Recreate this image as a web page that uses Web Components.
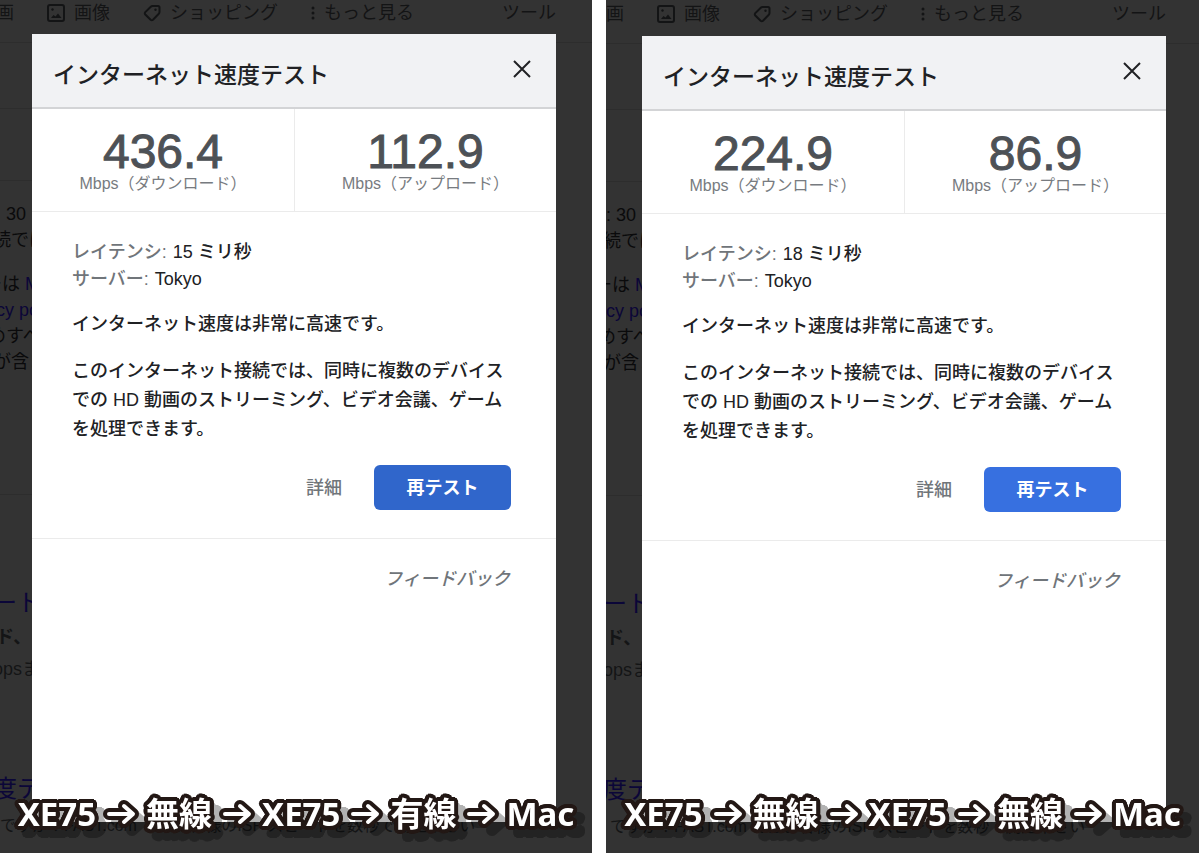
<!DOCTYPE html>
<html lang="ja">
<head>
<meta charset="UTF-8">
<meta name="viewport" content="width=device-width, initial-scale=1.0">
<title>インターネット速度テスト</title>
<style>
    body {
        margin: 0;
        background: #fff;
        font-family: "Liberation Sans", "Noto Sans CJK JP", sans-serif;
    }
</style>
</head>
<body>
<speed-compare>
    <search-pane style="--left: 32px; --right: 36px; --top: 34px; --shift: 0px">
        <speed-dialog slot="dialog" download="436.4" upload="112.9" latency="15" server="Tokyo" style="--accent: #3066cb"></speed-dialog>
        <route-caption slot="caption" route="XE75,無線,XE75,有線,Mac"></route-caption>
    </search-pane>
    <search-pane style="--left: 36px; --right: 33px; --top: 36px; --shift: 1px">
        <speed-dialog slot="dialog" download="224.9" upload="86.9" latency="18" server="Tokyo" style="--accent: #3770e0"></speed-dialog>
        <route-caption slot="caption" route="XE75,無線,XE75,無線,Mac"></route-caption>
    </search-pane>
</speed-compare>

<script>
class SpeedCompare extends HTMLElement {
    connectedCallback() {
        this.attachShadow({ mode: 'open' });
        this.shadowRoot.innerHTML = `
            <style>
                :host {
                    display: grid;
                    grid-template-columns: 592fr 593fr;
                    gap: 14px;
                    padding-right: 1px;
                    min-height: 100vh;
                    box-sizing: border-box;
                }
            </style>
            <slot></slot>
        `;
    }
}

// Dimmed results page with the dialog and the caption on top
class SearchPane extends HTMLElement {
    connectedCallback() {
        this.attachShadow({ mode: 'open' });
        this.shadowRoot.innerHTML = `
            <style>
                :host {
                    display: block;
                    position: relative;
                    overflow: hidden;
                    background: #333;
                    color: #0a0a0b;
                    font-size: 18px;
                    line-height: 26px;
                    white-space: nowrap;
                }
                .page {
                    margin-left: calc(var(--left) - 52px);
                    padding-top: var(--shift);
                }
                .tabs {
                    display: flex;
                    align-items: center;
                    padding: 0 var(--right) 16px 16px;
                    border-bottom: 1px solid #2d2d2d;
                }
                .tabs a {
                    display: flex;
                    align-items: center;
                    gap: 9px;
                    margin-right: 33px;
                    color: #131415;
                    text-decoration: none;
                }
                .tabs a.tools {
                    margin: 0 0 0 auto;
                }
                .tabs svg {
                    width: 18px;
                    height: 18px;
                    fill: none;
                    stroke: currentColor;
                    stroke-width: 2;
                }
                .tabs .more svg {
                    width: 4px;
                    fill: currentColor;
                    stroke: none;
                }
                section {
                    width: 80%;
                    box-sizing: border-box;
                    border-bottom: 1px solid #2d2d2d;
                }
                .row {
                    height: 66px;
                }
                .row.tall {
                    height: 72px;
                }
                .answer {
                    height: 314px;
                    padding-top: 20px;
                }
                p, h3 {
                    margin: 0;
                    font-weight: 400;
                }
                .gap {
                    margin-top: 18px;
                }
                /* lines of the page scrolled partly out of view */
                .in1 { padding-left: 4px; }
                .in2 { padding-left: 8px; }
                .in3 { padding-left: 13px; }
                .in4 { padding-left: 16px; }
                .in5 { padding-left: 20px; }
                a {
                    color: #0b0638;
                    text-decoration: none;
                }
                .results {
                    padding-top: 90px;
                    color: #141516;
                }
                h3 {
                    font-size: 24px;
                    line-height: 36px;
                }
                .results p {
                    line-height: 32px;
                }
                .results .small {
                    font-size: 16px;
                    line-height: 38px;
                }
                .next {
                    margin-top: 86px;
                }
                ::slotted([slot="dialog"]) {
                    position: absolute;
                    top: var(--top);
                    right: var(--right);
                    bottom: 31px;
                    left: var(--left);
                }
                ::slotted([slot="caption"]) {
                    position: absolute;
                    right: 0;
                    bottom: 16px;
                    left: 0;
                }
            </style>
            <div class="page">
                <nav class="tabs">
                    <a href="#">画</a>
                    <a href="#">
                        <svg viewBox="0 0 18 18" aria-hidden="true"><rect x="1" y="1" width="16" height="16" rx="2"/><path d="M4 14l2.500-3 2 1.500 2.500-3 3.500 4.500z" fill="currentColor" stroke="none"/><circle cx="5.500" cy="5.500" r="1.200" fill="currentColor" stroke="none"/></svg>
                        画像
                    </a>
                    <a href="#">
                        <svg viewBox="0 0 18 18" aria-hidden="true"><path d="M9.500 2H15q1.500 0 1.500 1.500V8q0 1-.7 1.700l-5.800 6q-1.200 1-2.400 0L2.300 10.500q-1-1.200 0-2.400L7.800 2.700Q8.500 2 9.500 2z"/><circle cx="12.500" cy="5.700" r="1.200" fill="currentColor" stroke="none"/></svg>
                        ショッピング
                    </a>
                    <a href="#" class="more">
                        <svg viewBox="0 0 4 18" aria-hidden="true"><circle cx="2" cy="4" r="1.500"/><circle cx="2" cy="9" r="1.500"/><circle cx="2" cy="14" r="1.500"/></svg>
                        もっと見る
                    </a>
                    <a href="#" class="tools">ツール</a>
                </nav>
                <section class="row"></section>
                <section class="row tall"></section>
                <section class="answer">
                    <p class="in4">: 30</p>
                    <p class="in3">続では</p>
                    <p class="gap in1">ーは <a href="#">M</a></p>
                    <p class="in4"><a href="#">cy po</a></p>
                    <p class="in2">めすべ</p>
                    <p class="in3">が含ま</p>
                </section>
                <div class="results">
                    <h3 class="in3"><a href="#">ート</a></h3>
                    <p class="in4"><b>ド、</b></p>
                    <p class="in3">opsま</p>
                    <h3 class="next in3"><a href="#">度テ</a></h3>
                    <p class="small in5">ですか？FAST.com ではお客様のISP スピードを数秒で測定下さい</p>
                </div>
            </div>
            <slot name="dialog"></slot>
            <slot name="caption"></slot>
        `;
    }
}

class SpeedDialog extends HTMLElement {
    connectedCallback() {
        this.attachShadow({ mode: 'open' });
        this.shadowRoot.innerHTML = `
            <style>
                :host {
                    display: block;
                    background: #fff;
                    color: #202124;
                    font-size: 18px;
                    white-space: normal;
                }
                header {
                    display: flex;
                    justify-content: space-between;
                    align-items: flex-start;
                    padding: 23px 20px 13px 21px;
                    background: #f1f2f4;
                    border-bottom: 2px solid #d3d4d6;
                }
                h2 {
                    margin: 0;
                    font-size: 23px;
                    line-height: 37px;
                    font-weight: 500;
                }
                button {
                    border: 0;
                    padding: 0;
                    background: none;
                    font: inherit;
                    color: inherit;
                    cursor: pointer;
                }
                .close {
                    display: flex;
                    padding: 2px 4px;
                }
                .close svg {
                    width: 20px;
                    height: 20px;
                    stroke: #202124;
                    stroke-width: 2;
                }
                .results {
                    display: grid;
                    grid-template-columns: 1fr 1fr;
                    border-bottom: 1px solid #ebebeb;
                }
                .result {
                    padding: 21px 0 17px;
                    text-align: center;
                    color: #777b80;
                    font-size: 16px;
                    line-height: 20px;
                }
                .result + .result {
                    border-left: 1px solid #ebebeb;
                }
                .value {
                    display: block;
                    color: #4d5156;
                    font-size: 48px;
                    line-height: 44px;
                    -webkit-text-stroke: 1px #4d5156;
                }
                .body {
                    padding: 27px 45px 28px 40px;
                    border-bottom: 1px solid #ebebeb;
                    font-weight: 500;
                }
                dl {
                    margin: 0;
                    line-height: 27px;
                }
                dl div {
                    display: flex;
                    gap: 6px;
                }
                dt {
                    color: #70757a;
                }
                dd {
                    margin: 0;
                }
                p {
                    margin: 17px 0 0;
                    line-height: 29px;
                }
                p + p {
                    margin-top: 18px;
                }
                .actions {
                    display: flex;
                    justify-content: flex-end;
                    align-items: center;
                    gap: 32px;
                    margin-top: 21px;
                }
                .details {
                    color: #70757a;
                }
                .retry {
                    width: 137px;
                    height: 45px;
                    border-radius: 6px;
                    background: var(--accent);
                    color: #fff;
                    font-weight: 700;
                }
                footer {
                    padding: 27px 46px;
                    text-align: right;
                    font-style: italic;
                    font-weight: 500;
                    line-height: 27px;
                }
                footer a {
                    color: #70757a;
                    text-decoration: none;
                }
            </style>
            <div role="dialog" aria-labelledby="title">
                <header>
                    <h2 id="title">インターネット速度テスト</h2>
                    <button class="close" aria-label="閉じる">
                        <svg viewBox="0 0 20 20" aria-hidden="true"><path d="M2 2l16 16M18 2L2 18"/></svg>
                    </button>
                </header>
                <div class="results">
                    <div class="result"><span class="value">${this.getAttribute('download')}</span>Mbps（ダウンロード）</div>
                    <div class="result"><span class="value">${this.getAttribute('upload')}</span>Mbps（アップロード）</div>
                </div>
                <div class="body">
                    <dl>
                        <div><dt>レイテンシ:</dt><dd>${this.getAttribute('latency')} ミリ秒</dd></div>
                        <div><dt>サーバー:</dt><dd>${this.getAttribute('server')}</dd></div>
                    </dl>
                    <p>インターネット速度は非常に高速です。</p>
                    <p>このインターネット接続では、同時に複数のデバイスでの HD 動画のストリーミング、ビデオ会議、ゲームを処理できます。</p>
                    <div class="actions">
                        <button class="details">詳細</button>
                        <button class="retry">再テスト</button>
                    </div>
                </div>
                <footer><a href="#">フィードバック</a></footer>
            </div>
        `;
    }
}

// Outlined caption: the stops of the route joined by arrows
class RouteCaption extends HTMLElement {
    connectedCallback() {
        const stops = this.getAttribute('route').split(',');

        // A ring of hard shadows gives the letters a rounded outline
        const outline = [];
        for (let i = 0; i < 24; i++) {
            const angle = i * Math.PI / 12;
            outline.push(`${(4 * Math.cos(angle)).toFixed(2)}px ${(4 * Math.sin(angle)).toFixed(2)}px 0 #231815`);
        }

        this.attachShadow({ mode: 'open' });
        this.shadowRoot.innerHTML = `
            <style>
                :host {
                    display: flex;
                    justify-content: center;
                    align-items: center;
                    gap: 11px;
                    color: #fff;
                    font: 700 33px/46px "Noto Sans", "Noto Sans CJK JP", sans-serif;
                    white-space: nowrap;
                    text-shadow: ${outline.join(', ')};
                    filter: drop-shadow(8px 8px 0 rgba(0, 0, 0, 0.3));
                }
                svg {
                    width: 28px;
                    height: 24px;
                    overflow: visible;
                    fill: none;
                    stroke-linecap: round;
                    stroke-linejoin: round;
                }
                .edge {
                    stroke: #231815;
                    stroke-width: 12;
                }
                .line {
                    stroke: #fff;
                    stroke-width: 4;
                }
            </style>
            ${stops.map(stop => `<span>${stop}</span>`).join(`
                <svg viewBox="0 0 28 24" role="img" aria-label="から">
                    <path class="edge" d="M2 12h23M17 4l9 8-9 8"/>
                    <path class="line" d="M2 12h23M17 4l9 8-9 8"/>
                </svg>
            `)}
        `;
    }
}

customElements.define('speed-compare', SpeedCompare);
customElements.define('search-pane', SearchPane);
customElements.define('speed-dialog', SpeedDialog);
customElements.define('route-caption', RouteCaption);
</script>
</body>
</html>
